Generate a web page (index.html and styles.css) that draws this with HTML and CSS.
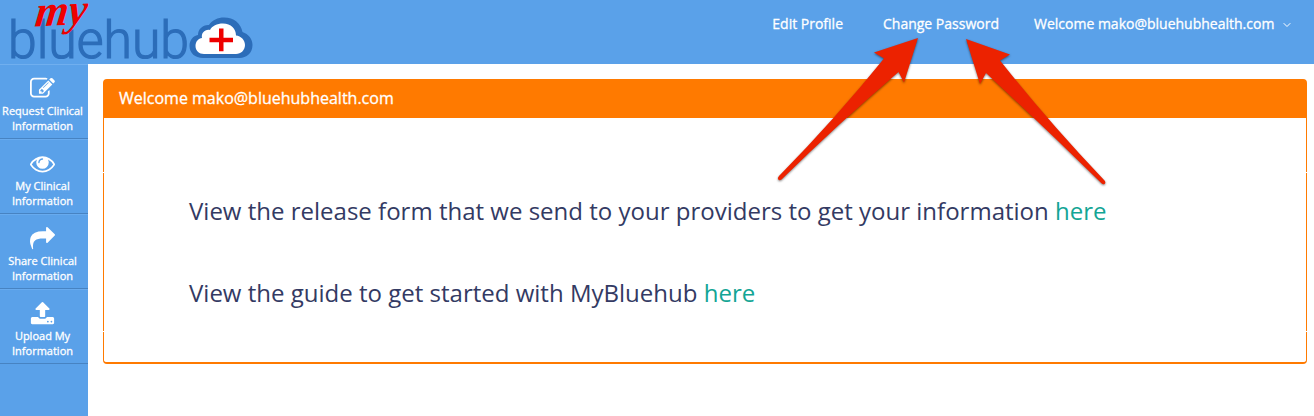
FILE: index.html
```html
<!doctype html>
<html lang="en">
  <head>
    <meta charset="UTF-8" />
    <meta name="viewport" content="width=device-width, initial-scale=1" />
    <title>MyBluehub</title>
    <link rel="stylesheet" href="styles.css">
  </head>

  <body>
    <header class="topbar">
      <a class="logo" href="#">
        <svg width="260" height="64" viewBox="0 0 260 64">
          <text class="logo-name" x="8" y="57.500" textLength="181" lengthAdjust="spacingAndGlyphs">bluehub</text>
          <path class="cloud-outer" d="M203 58c-8 0-13.500-5-13.500-12 0-6 3.500-10 8.500-11 0-6 5-10.500 11-10 3-5 9-7.500 15-7.500 10 0 17 6 18.500 14.500 6 2 10 7 10 13 0 8-6 13-13 13z" />
          <path class="cloud-inner" d="M204 54c-5 0-8.500-3.500-8.500-8 0-4.500 3-7.500 6.500-8-1-5 3-9 8-8 2-4 7-6.500 13-6.500 8 0 13 5 13 12 5 .5 9 4.500 9 9.500 0 5-4 9-9 9z" />
          <path class="cross" d="M219 28.500h4.500v9.200h9.500v4.600h-9.500v9h-4.500v-9h-9.500v-4.600h9.500z" />
          <text class="logo-my" transform="translate(34 26.500) rotate(-3) skewX(-10)" textLength="52" lengthAdjust="spacingAndGlyphs">my</text>
        </svg>
      </a>
      <nav class="topnav">
        <a href="#">Edit Profile</a>
        <a href="#">Change Password</a>
        <a class="account" href="#">
          Welcome mako@bluehubhealth.com
          <svg class="chevron" width="8" height="6" viewBox="0 0 8 6"><path d="M.7 1.200 4 4.500l3.300-3.300" /></svg>
        </a>
      </nav>
    </header>

    <div class="page">
      <nav class="sidebar">
        <a href="#">
          <svg class="icon" viewBox="0 0 1792 1792"><path d="M888 1184l116-116-152-152-116 116v56h96v96h56zm440-720q-16-16-33 1l-350 350q-17 17-1 33t33-1l350-350q17-17 1-33zm80 594v190q0 119-84.500 203.500t-203.500 84.500h-832q-119 0-203.500-84.500t-84.500-203.500v-832q0-119 84.500-203.500t203.500-84.500h832q63 0 117 25 15 7 18 23 3 17-9 29l-49 49q-14 14-32 8-23-6-45-6h-832q-66 0-113 47t-47 113v832q0 66 47 113t113 47h832q66 0 113-47t47-113v-126q0-13 9-22l64-64q15-15 35-7t20 29zm-96-738l288 288-672 672h-288v-288zm444 132l-92 92-288-288 92-92q28-28 68-28t68 28l152 152q28 28 28 68t-28 68z" /></svg>
          <span>Request Clinical<br />Information</span>
        </a>
        <a href="#">
          <svg class="icon" viewBox="0 0 1792 1792"><path d="M1664 960q-152-236-381-353 61 104 61 225 0 185-131.500 316.500t-316.500 131.500-316.500-131.500-131.500-316.500q0-121 61-225-229 117-381 353 133 205 333.500 326.500t434.500 121.500 434.500-121.500 333.500-326.500zM944 576q0-20-14-34t-34-14q-125 0-214.500 89.500t-89.500 214.500q0 20 14 34t34 14 34-14 14-34q0-86 61-147t147-61q20 0 34-14t14-34zm848 384q0 34-20 69-140 230-376.500 368.500t-499.500 138.500-499.500-139-376.500-368q-20-35-20-69t20-69q140-229 376.500-368t499.500-139 499.500 139 376.500 368q20 35 20 69z" /></svg>
          <span>My Clinical<br />Information</span>
        </a>
        <a href="#">
          <svg class="icon" viewBox="0 0 1792 1792"><path d="M1792 640q0 26-19 45l-512 512q-19 19-45 19t-45-19-19-45v-256h-224q-98 0-175.500 6t-154 21.500-133 42.500-105.500 69.500-80 101-48.500 138.500-17.500 181q0 55 5 123 0 6 2.500 23.500t2.500 26.500q0 15-8.500 25t-23.500 10q-16 0-28-17-7-9-13-22t-13.500-30-10.500-24q-127-285-127-451 0-199 53-333 162-403 875-403h224v-256q0-26 19-45t45-19 45 19l512 512q19 19 19 45z" /></svg>
          <span>Share Clinical<br />Information</span>
        </a>
        <a href="#">
          <svg class="icon" viewBox="0 0 1792 1792"><path d="M1344 1472q0-26-19-45t-45-19-45 19-19 45 19 45 45 19 45-19 19-45zm256 0q0-26-19-45t-45-19-45 19-19 45 19 45 45 19 45-19 19-45zm128-224v320q0 40-28 68t-68 28h-1472q-40 0-68-28t-28-68v-320q0-40 28-68t68-28h427q21 56 70.500 92t110.500 36h256q61 0 110.500-36t70.500-92h427q40 0 68 28t28 68zm-325-648q-17 40-59 40h-256v448q0 26-19 45t-45 19h-256q-26 0-45-19t-19-45v-448h-256q-42 0-59-40-17-39 14-69l448-448q18-19 45-19t45 19l448 448q31 30 14 69z" /></svg>
          <span>Upload My<br />Information</span>
        </a>
      </nav>

      <main class="content">
        <section class="panel">
          <h1 class="panel-title">Welcome mako@bluehubhealth.com</h1>
          <div class="panel-body">
            <p>View the release form that we send to your providers to get your information <a href="#">here</a></p>
            <p>View the guide to get started with MyBluehub <a href="#">here</a></p>
          </div>
        </section>
      </main>
    </div>

    <!-- arrows pointing at Change Password -->
    <svg class="arrows" width="1314" height="416" viewBox="0 0 1314 416">
      <path d="M918 38 904 82.500 898.500 72Q838 124 781.500 179.500 779.500 181 778.300 179.500 777 178 779 176 836 118 884 58.500L874 52.500z" />
      <path d="M966 39 1010 54.500 1000 60.500Q1048 121 1104.500 180.500 1106 182.500 1104.800 183.700 1103.300 185 1101.500 183.300 1045 128 986 73L980 84z" />
    </svg>
  </body>
</html>
```
FILE: styles.css
```css
* {
  box-sizing: border-box;
}

body {
  margin: 0;
  height: 100vh;
  display: flex;
  flex-direction: column;
  overflow: hidden;
  background: white;
  font-family: "Open Sans", sans-serif;
}

a {
  text-decoration: none;
}

.topbar {
  display: flex;
  justify-content: space-between;
  flex: 0 0 64px;
  background: #5aa1e9;
}

.logo svg {
  display: block;
  overflow: visible;
}

.logo-name {
  font-family: Roboto, sans-serif;
  font-size: 51px;
  font-weight: 300;
  fill: #2c6db9;
  stroke: #2c6db9;
  stroke-width: 1.2;
}

.logo-my {
  font-family: "Liberation Serif", serif;
  font-size: 44px;
  font-style: italic;
  font-weight: bold;
  fill: #ee0000;
}

.cloud-outer {
  fill: #2c6db9;
}

.cloud-inner {
  fill: white;
}

.cross {
  fill: #ee0000;
}

.topnav {
  display: flex;
  gap: 40px;
  padding: 14px 23px 0 0;
}

.topnav a {
  color: white;
  font-size: 14px;
  line-height: 20px;
  white-space: nowrap;
  -webkit-text-stroke: 0.3px white;
}

.topnav .account {
  margin-left: -5px;
}

.chevron {
  margin-left: 5px;
  vertical-align: 1px;
  fill: none;
  stroke: white;
}

.page {
  display: flex;
  flex: 1;
}

.sidebar {
  flex: 0 0 88px;
  background: #5aa1e9;
  box-shadow: inset 0 1px #70afef;
}

.sidebar a {
  display: flex;
  flex-direction: column;
  align-items: center;
  height: 75px;
  padding: 12px 3px 0 0;
  border-bottom: 1px solid #4783c2;
  color: white;
  font-size: 11px;
  line-height: 15px;
  text-align: center;
  white-space: nowrap;
  -webkit-text-stroke: 0.3px white;
}

.sidebar a + a {
  box-shadow: inset 0 1px #68abef;
}

.icon {
  width: 25px;
  height: 25px;
  margin-bottom: 2px;
  fill: white;
}

.content {
  flex: 1;
  padding: 15px 7px 0 15px;
}

.panel {
  height: 285px;
  border: 1px solid #ff7a00;
  border-bottom-width: 2px;
  border-radius: 4px;
}

.panel-title {
  margin: 0;
  height: 38px;
  padding-left: 15px;
  background: #ff7a00;
  color: white;
  font-size: 16px;
  font-weight: 400;
  line-height: 37px;
  -webkit-text-stroke: 0.3px white;
}

/* the side borders break where the body starts and ends */
.panel-body {
  height: 160px;
  margin: 54px -1px 0;
  padding: 19px 0 0 86px;
  border: solid white;
  border-width: 1px 0;
  background: linear-gradient(#ff7a00, #ff7a00) left / 1px 100% no-repeat,
    linear-gradient(#ff7a00, #ff7a00) right / 1px 100% no-repeat;
  background-clip: padding-box;
}

.panel-body p {
  margin: 0 0 44px;
  color: #333a63;
  font-size: 24.020px;
  line-height: 38px;
  white-space: nowrap;
}

.panel-body a {
  color: #13a595;
}

.arrows {
  position: absolute;
  top: 0;
  left: 0;
  fill: #ec2200;
  filter: drop-shadow(0 1px 1px rgba(0, 0, 0, 0.5));
  pointer-events: none;
}
```
